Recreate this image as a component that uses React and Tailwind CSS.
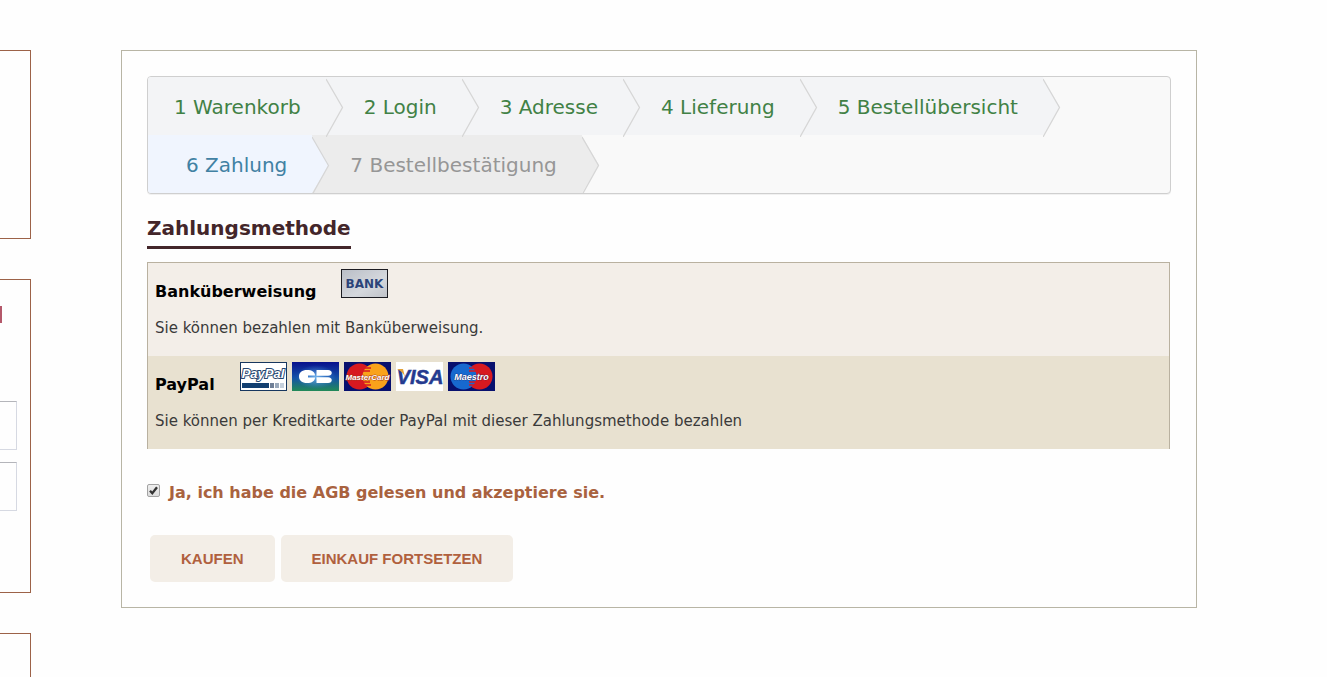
import { useState } from 'react';

const steps = [
  { label: '1 Warenkorb', state: 'done' },
  { label: '2 Login', state: 'done' },
  { label: '3 Adresse', state: 'done' },
  { label: '4 Lieferung', state: 'done' },
  { label: '5 Bestellübersicht', state: 'done' },
  { label: '6 Zahlung', state: 'current' },
  { label: '7 Bestellbestätigung', state: 'todo' },
];

const stepStyles = {
  done: { item: 'bg-[#f3f4f6] text-[#418145]', arrow: 'fill-[#f3f4f6]' },
  current: { item: 'bg-[#f0f5fe] text-[#4181a3]', arrow: 'fill-[#f0f5fe]' },
  todo: { item: 'bg-[#ececec] text-[#969696]', arrow: 'fill-[#ececec]' },
};

function Step({ label, state, first }) {
  const styles = stepStyles[state];
  return (
    <li className={`relative h-[58px] pr-[25px] text-[20px] leading-[60px] ${first ? 'pl-[26px]' : 'pl-[38px]'} ${styles.item}`}>
      <a href="#" className="whitespace-nowrap">{label}</a>
      <svg className="absolute left-full top-0 z-10 h-[60px] w-[18px]" viewBox="0 0 18 60">
        <path d="M0 0 V1 L17 30 L0 58 Z" className={styles.arrow} />
        <path d="M0 2 L16.5 30.5 L0 60" fill="none" stroke="#d6d6d6" strokeWidth="1.3" />
      </svg>
    </li>
  );
}

function BankLogo() {
  return (
    <svg className="h-[29px] w-[47px]" viewBox="0 0 47 29">
      <defs>
        <linearGradient id="bank" x1="0" y1="0" x2="1" y2="1">
          <stop offset="0" stopColor="#b9bdc6" />
          <stop offset="0.6" stopColor="#d5d8dd" />
          <stop offset="1" stopColor="#bfc2c8" />
        </linearGradient>
      </defs>
      <rect x="0.5" y="0.5" width="46" height="28" fill="url(#bank)" stroke="#1c1c22" />
      <text x="23.5" y="19" textAnchor="middle" fontSize="12" fontWeight="bold" fontFamily="'DejaVu Sans', sans-serif" fill="#2b4379">BANK</text>
    </svg>
  );
}

function PayPalLogo() {
  return (
    <svg className="h-[29px] w-[47px]" viewBox="0 0 47 29">
      <rect x="0.5" y="0.5" width="46" height="28" fill="#fff" stroke="#17375f" />
      <text x="23" y="16" textAnchor="middle" fontSize="13" fontWeight="bold" fontStyle="italic" fontFamily="'Liberation Sans', sans-serif" fill="#fff" stroke="#26466f" strokeWidth="2" paintOrder="stroke">PayPal</text>
      <rect x="2" y="21" width="27" height="5" fill="#123f70" />
      <rect x="30" y="21" width="4" height="5" fill="#6f7f96" />
      <rect x="35" y="21" width="4" height="5" fill="#9aa9bb" />
      <rect x="40" y="21" width="4" height="5" fill="#c5d0dc" />
    </svg>
  );
}

function CarteBleueLogo() {
  return (
    <svg className="h-[29px] w-[47px]" viewBox="0 0 47 29">
      <defs>
        <linearGradient id="cb" x1="0" y1="0" x2="0" y2="1">
          <stop offset="0" stopColor="#07108c" />
          <stop offset="0.55" stopColor="#1552a8" />
          <stop offset="1" stopColor="#228a57" />
        </linearGradient>
        <radialGradient id="cbGlow" cx="0.5" cy="0.5" r="0.5">
          <stop offset="0" stopColor="#8fd0ff" stopOpacity="0.8" />
          <stop offset="1" stopColor="#3f8ede" stopOpacity="0" />
        </radialGradient>
      </defs>
      <rect width="47" height="29" fill="url(#cb)" />
      <ellipse cx="24" cy="15" rx="20" ry="12" fill="url(#cbGlow)" />
      <path d="M15 8 C20 8 23 10 23 13.5 H16 V15.5 H23 C23 19 20 21 15 21 C10 21 7 18.500 7 14.500 C7 10.500 10 8 15 8 Z" fill="#fff" />
      <path d="M24.500 8 H36 C41 8 41 13.800 36 13.800 H24.500 Z M24.500 15.200 H36 C41 15.200 41 21 36 21 H24.500 Z" fill="#fff" />
    </svg>
  );
}

function MasterCardLogo() {
  return (
    <svg className="h-[29px] w-[47px]" viewBox="0 0 47 29">
      <rect width="47" height="29" fill="#07106e" />
      <circle cx="15.500" cy="14.500" r="13" fill="#d71920" />
      <circle cx="31.500" cy="14.500" r="13" fill="#f9a21b" />
      <path d="M21 6 H27 M19 9 H26 M19 20 H26 M21 23 H27" stroke="#d71920" strokeWidth="1.500" />
      <text x="23.500" y="17.500" textAnchor="middle" fontSize="8" fontWeight="bold" fontStyle="italic" fontFamily="'Liberation Sans', sans-serif" fill="#fff" stroke="#a5381c" strokeWidth="0.800" paintOrder="stroke">MasterCard</text>
    </svg>
  );
}

function VisaLogo() {
  return (
    <svg className="h-[29px] w-[47px]" viewBox="0 0 47 29">
      <rect width="47" height="29" fill="#fff" />
      <text x="24" y="22" textAnchor="middle" fontSize="20" fontWeight="bold" fontStyle="italic" fontFamily="'Liberation Sans', sans-serif" fill="#243a8f" stroke="#243a8f" strokeWidth="0.5">VISA</text>
      <path d="M1 7 H7 L9 15 C7 11 5 9 1 7 Z" fill="#e3a23a" />
    </svg>
  );
}

function MaestroLogo() {
  return (
    <svg className="h-[29px] w-[47px]" viewBox="0 0 47 29">
      <rect width="47" height="29" fill="#07106e" />
      <circle cx="31.500" cy="14.500" r="13" fill="#d71920" />
      <circle cx="15.500" cy="14.500" r="13" fill="#1769cf" />
      <path d="M27 6 H21 M28 9 H21 M28 20 H21 M27 23 H21" stroke="#d71920" strokeWidth="1.500" />
      <text x="23.500" y="18" textAnchor="middle" fontSize="9" fontWeight="bold" fontStyle="italic" fontFamily="'Liberation Sans', sans-serif" fill="#fff" stroke="#26235e" strokeWidth="0.600" paintOrder="stroke">Maestro</text>
    </svg>
  );
}

function PaymentMethod({ title, text, tone, children }) {
  return (
    <a href="#" className={`block h-[93px] px-[7px] pt-[6px] ${tone}`}>
      <span className="flex items-start gap-[25px]">
        <strong className="pt-[11px] text-[16px] leading-6 text-black">{title}</strong>
        <span className="flex gap-[5px]">{children}</span>
      </span>
      <span className="mt-3 block text-[15px] leading-6 text-[#3a3a3a]">{text}</span>
    </a>
  );
}

function Sidebar() {
  return (
    <aside className="w-[31px] shrink-0 space-y-10 overflow-hidden">
      <div className="h-[189px] border-y border-r border-[#9c6248]" />
      <div className="h-[314px] border-y border-r border-[#9c6248] pr-[13px] pt-[26px]">
        <div className="h-[17px] w-[2px] bg-[#b4586a]" />
        <div className="mt-[78px] space-y-3">
          <input aria-label="E-Mail" className="block h-[49px] w-full border-y border-r border-[#d6d9e2] border-t-[#b4b5ba]" />
          <input aria-label="Passwort" type="password" className="block h-[49px] w-full border-y border-r border-[#d6d9e2] border-t-[#b4b5ba]" />
        </div>
      </div>
      <div className="h-[189px] border-y border-r border-[#9c6248]" />
    </aside>
  );
}

export default function App() {
  const [accepted, setAccepted] = useState(true);

  return (
    <div className="flex h-screen items-start overflow-hidden bg-[#fefefe] pt-[50px] font-['DejaVu_Sans',Verdana,sans-serif]">
      <Sidebar />
      <main className="ml-[90px] mr-[130px] min-w-0 flex-1 border border-[#b8b5a5] p-[25px]">
        <ol className="flex flex-wrap overflow-hidden rounded border border-[#cfcfcf] bg-[#f9f9f9] shadow-2xs">
          {steps.map((step, i) => (
            <Step key={step.label} label={step.label} state={step.state} first={i === 0} />
          ))}
        </ol>

        <h1 className="mt-5 w-fit border-b-[3px] border-[#43262a] pb-1 text-[20px] font-bold leading-7 text-[#43262a]">Zahlungsmethode</h1>

        <section className="mr-px mt-[13px] border-x border-t border-[#b9b1a0]">
          <PaymentMethod title="Banküberweisung" text="Sie können bezahlen mit Banküberweisung." tone="bg-[#f3eee8]">
            <BankLogo />
          </PaymentMethod>
          <PaymentMethod title="PayPal" text="Sie können per Kreditkarte oder PayPal mit dieser Zahlungsmethode bezahlen" tone="bg-[#e8e1d0]">
            <PayPalLogo />
            <CarteBleueLogo />
            <MasterCardLogo />
            <VisaLogo />
            <MaestroLogo />
          </PaymentMethod>
        </section>

        <div className="mt-8 flex items-start gap-[9px]">
          <span className="relative mt-[3px] size-[13px]">
            <input
              id="agb"
              type="checkbox"
              checked={accepted}
              onChange={e => setAccepted(e.target.checked)}
              className="block size-[13px] appearance-none rounded-[2px] border border-[#a3a3a3] bg-linear-to-b from-[#efefef] to-[#dcdcdc]"
            />
            {accepted && (
              <svg className="pointer-events-none absolute inset-0 size-[13px]" viewBox="0 0 13 13">
                <path d="M3 6.800 L5.300 9.300 L10 3.300" fill="none" stroke="#333" strokeWidth="2.300" />
              </svg>
            )}
          </span>
          <label htmlFor="agb" className="text-[16px] font-bold leading-6 text-[#a9623f]">Ja, ich habe die AGB gelesen und akzeptiere sie.</label>
        </div>

        <div className="ml-[3px] mt-[30px] flex gap-[6px] font-['Liberation_Sans',Arial,sans-serif] text-[15px] font-bold text-[#b0603e]">
          <button className="h-[47px] rounded-[5px] bg-[#f3eee7] px-[31px] pt-[2px]">KAUFEN</button>
          <button className="h-[47px] rounded-[5px] bg-[#f3eee7] px-[31px] pt-[2px]">EINKAUF FORTSETZEN</button>
        </div>
      </main>
    </div>
  );
}
